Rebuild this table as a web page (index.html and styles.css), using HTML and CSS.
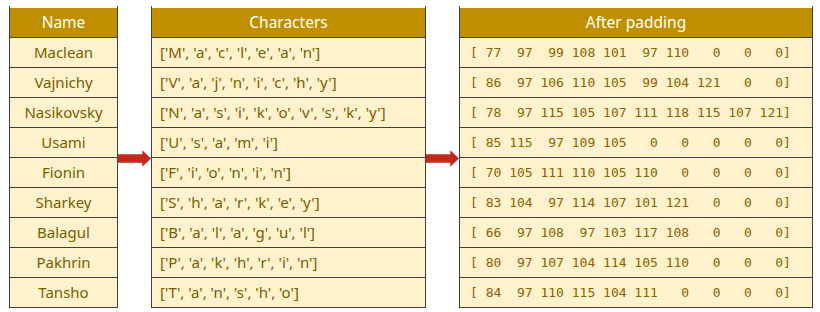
FILE: index.html
```html
<!DOCTYPE html>
<html>
<head>
<meta charset="utf-8">
<link rel="stylesheet" href="styles.css">
</head>
<body>
<div class="wrap">
  <div class="tbl t-name">
    <div class="head">Name</div>
    <div class="row center">Maclean</div>
    <div class="row center">Vajnichy</div>
    <div class="row center">Nasikovsky</div>
    <div class="row center">Usami</div>
    <div class="row center">Fionin</div>
    <div class="row center">Sharkey</div>
    <div class="row center">Balagul</div>
    <div class="row center">Pakhrin</div>
    <div class="row center">Tansho</div>
  </div>
  <div class="gap"><svg class="arrow" width="34" height="17" viewBox="0 0 34 17"><polygon points="0,4 25,4 25,0 34,8.5 25,17 25,13 0,13" fill="#C0291B"/><rect x="0" y="4" width="25" height="1" fill="#D0604F"/></svg></div>
  <div class="tbl t-chars">
    <div class="head">Characters</div>
    <div class="row">['M', 'a', 'c', 'l', 'e', 'a', 'n']</div>
    <div class="row">['V', 'a', 'j', 'n', 'i', 'c', 'h', 'y']</div>
    <div class="row">['N', 'a', 's', 'i', 'k', 'o', 'v', 's', 'k', 'y']</div>
    <div class="row">['U', 's', 'a', 'm', 'i']</div>
    <div class="row">['F', 'i', 'o', 'n', 'i', 'n']</div>
    <div class="row">['S', 'h', 'a', 'r', 'k', 'e', 'y']</div>
    <div class="row">['B', 'a', 'l', 'a', 'g', 'u', 'l']</div>
    <div class="row">['P', 'a', 'k', 'h', 'r', 'i', 'n']</div>
    <div class="row">['T', 'a', 'n', 's', 'h', 'o']</div>
  </div>
  <div class="gap"><svg class="arrow" width="34" height="17" viewBox="0 0 34 17"><polygon points="0,4 25,4 25,0 34,8.5 25,17 25,13 0,13" fill="#C0291B"/><rect x="0" y="4" width="25" height="1" fill="#D0604F"/></svg></div>
  <div class="tbl t-pad">
    <div class="head">After padding</div>
    <div class="row mono">[ 77  97  99 108 101  97 110   0   0   0]</div>
    <div class="row mono">[ 86  97 106 110 105  99 104 121   0   0]</div>
    <div class="row mono">[ 78  97 115 105 107 111 118 115 107 121]</div>
    <div class="row mono">[ 85 115  97 109 105   0   0   0   0   0]</div>
    <div class="row mono">[ 70 105 111 110 105 110   0   0   0   0]</div>
    <div class="row mono">[ 83 104  97 114 107 101 121   0   0   0]</div>
    <div class="row mono">[ 66  97 108  97 103 117 108   0   0   0]</div>
    <div class="row mono">[ 80  97 107 104 114 105 110   0   0   0]</div>
    <div class="row mono">[ 84  97 110 115 104 111   0   0   0   0]</div>
  </div>
</div>
</body>
</html>
```
FILE: styles.css
```css
html, body {
  margin: 0;
  padding: 0;
  background: #ffffff;
}
.wrap {
  display: flex;
  padding: 6px 0 0 9px;
  font-family: "Noto Sans", "Open Sans", sans-serif;
  font-size: 15px;
  color: #7A5C00;
}
.tbl {
  display: flex;
  flex-direction: column;
  border-left: 1px solid #404040;
  border-right: 1px solid #404040;
  padding-top: 2px;
  box-sizing: border-box;
}
.t-name { width: 109px; }
.t-chars { width: 275px; }
.t-pad { width: 354px; }
.gap {
  width: 33px;
  display: flex;
  align-items: center;
}
.arrow {
  display: block;
  margin-top: 2px;
}
.head {
  height: 29px;
  background: #BF8F00;
  color: #ffffff;
  display: flex;
  align-items: center;
  justify-content: center;
  line-height: 1;
  font-size: 15.5px;
}
.row {
  height: 29px;
  border-top: 1px solid #404040;
  background: #FFF2CC;
  display: flex;
  align-items: center;
  padding-left: 8px;
  line-height: 1;
  white-space: pre;
}
.row:last-child {
  border-bottom: 1px solid #404040;
}
.center {
  justify-content: center;
  padding-left: 0;
}
.mono {
  font-family: "DejaVu Sans Mono", "Liberation Mono", monospace;
  font-size: 13px;
  padding-left: 10px;
  color: #8A6300;
}
```
